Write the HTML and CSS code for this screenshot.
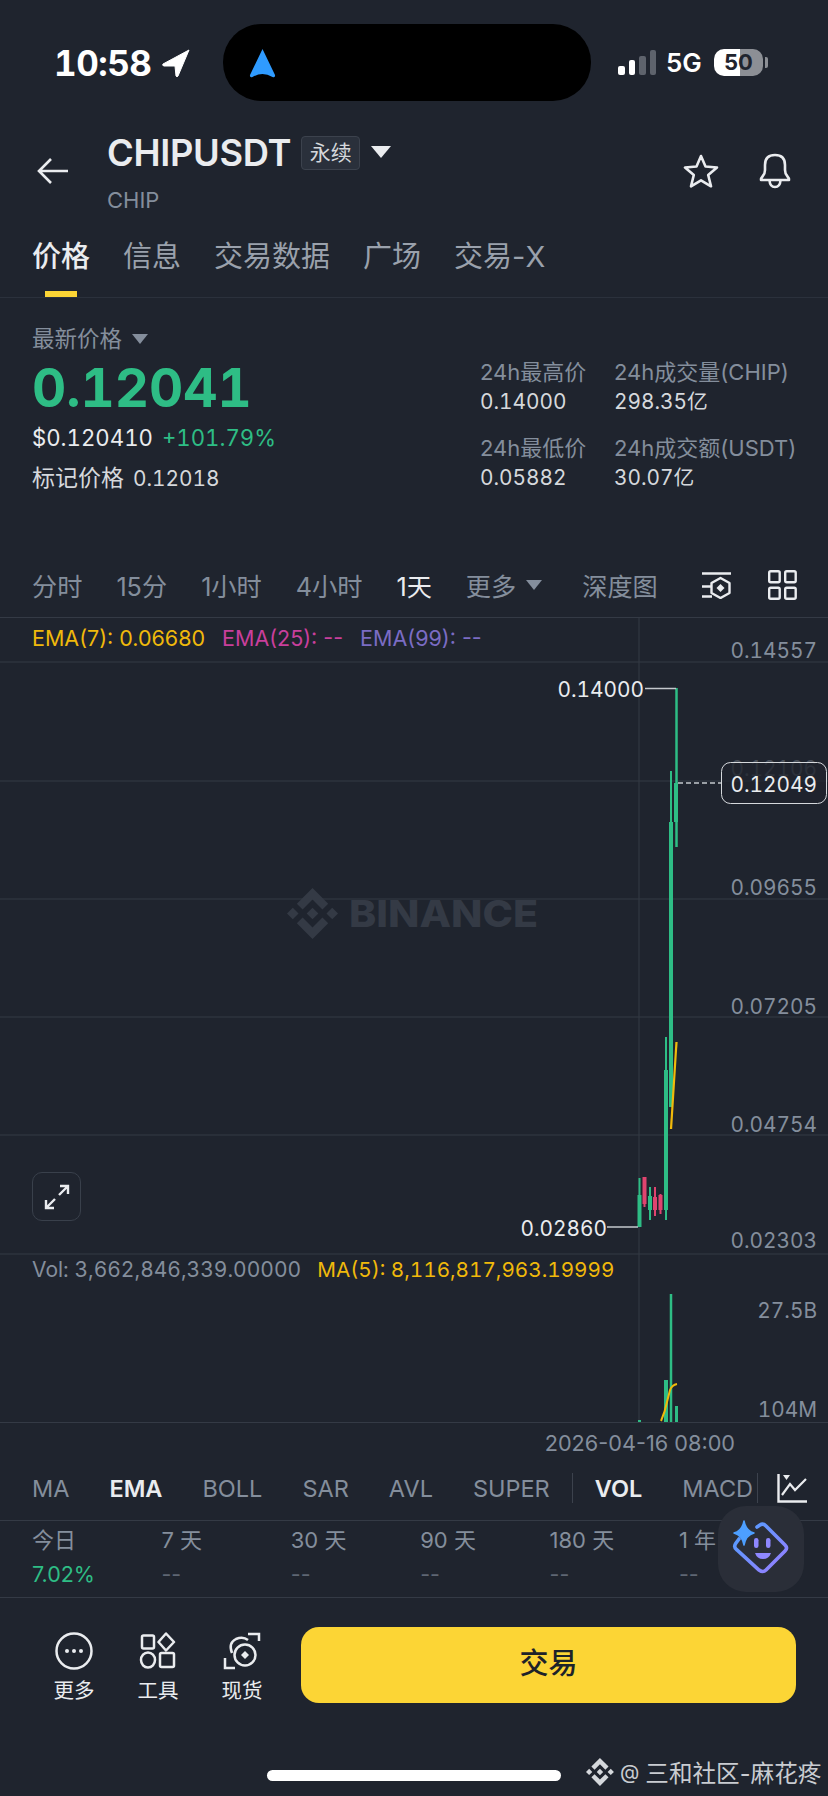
FILE: index.html
```html
<!DOCTYPE html>
<html lang="zh">
<head>
<meta charset="utf-8">
<title>CHIPUSDT</title>
<link rel="stylesheet" href="styles.css">
</head>
<body>
<div class="page">
  <div class="status">
    <div class="time">10:58</div>
    <svg class="loc" viewBox="0 0 28 28"><path d="M27 1 L1 15 Q0 16.500 2 17 L13 17 L14 27 Q15 28.500 16 27 Z" fill="#fff" stroke="#fff" stroke-width="1" stroke-linejoin="round"/></svg>
    <div class="island">
      <svg class="nav" viewBox="0 0 27 30"><path d="M13.500 1 L26 27 Q26.500 30 23.500 29 Q13.500 23 3.500 29 Q0.500 30 1 27 Z" fill="#2f9bff"/></svg>
    </div>
    <div class="sys">
      <div class="signal"><i class="b1"></i><i class="b2"></i><i class="b3"></i><i class="b4"></i></div>
      <div class="net">5G</div>
      <div class="batt">50</div>
      <div class="tip"></div>
    </div>
  </div>

  <div class="header">
    <svg class="back" viewBox="0 0 32 26"><path d="M31 13 H2 M14 1 L2 13 L14 25" fill="none" stroke="#eaecef" stroke-width="2.600"/></svg>
    <div class="title">
      <div class="title-row">
        <span class="sym">CHIPUSDT</span>
        <span class="tag">永续</span>
        <span class="tri tri-w"></span>
      </div>
      <div class="sub">CHIP</div>
    </div>
    <div class="head-icons">
      <svg class="star" viewBox="0 0 36 34"><path d="M18 2 L22.500 12.500 L34 13.500 L25.200 21 L28 32.300 L18 26.300 L8 32.300 L10.800 21 L2 13.500 L13.500 12.500 Z" fill="none" stroke="#eaecef" stroke-width="2.600" stroke-linejoin="round"/></svg>
      <svg class="bell" viewBox="0 0 36 36"><path d="M4 27 Q4 25 5.500 23.500 Q8 21 8 17 V12 Q8 2 18 2 Q28 2 28 12 V17 Q28 21 30.500 23.500 Q32 25 32 27 Z M12.500 27.500 Q13 34 18 34 Q23 34 23.500 27.500" fill="none" stroke="#eaecef" stroke-width="2.600" stroke-linejoin="round"/></svg>
    </div>
  </div>

  <div class="tabs">
    <span class="tab on">价格</span>
    <span class="tab">信息</span>
    <span class="tab">交易数据</span>
    <span class="tab">广场</span>
    <span class="tab">交易-X</span>
  </div>

  <div class="market">
    <div class="m-left">
      <div class="m-label"><span>最新价格</span><span class="tri tri-g"></span></div>
      <div class="price">0.12041</div>
      <div class="m-sub"><span>$0.120410</span><span class="up">+101.79%</span></div>
      <div class="m-mark"><span>标记价格</span><span class="num">0.12018</span></div>
    </div>
    <div class="m-right">
      <div class="cell"><div class="k">24h最高价</div><div class="v">0.14000</div></div>
      <div class="cell"><div class="k">24h成交量(CHIP)</div><div class="v">298.35亿</div></div>
      <div class="cell"><div class="k">24h最低价</div><div class="v">0.05882</div></div>
      <div class="cell"><div class="k">24h成交额(USDT)</div><div class="v">30.07亿</div></div>
    </div>
  </div>

  <div class="frames">
    <span>分时</span>
    <span>15分</span>
    <span>1小时</span>
    <span>4小时</span>
    <span class="on">1天</span>
    <span class="more"><span>更多</span><span class="tri tri-g"></span></span>
    <span class="depth">深度图</span>
    <svg class="ic-set" viewBox="0 0 31 28"><path d="M1 2.500 H30 M1 15.500 H11 M1 25.500 H11" fill="none" stroke="#eaecef" stroke-width="2.400"/><path d="M19.500 7 L28.500 12 V22 L19.500 27 L10.500 22 V12 Z" fill="none" stroke="#eaecef" stroke-width="2.400" stroke-linejoin="round"/><path d="M19.500 13 L23.500 17 L19.500 21 L15.500 17 Z" fill="#eaecef"/></svg>
    <svg class="ic-grid" viewBox="0 0 29 30"><g fill="none" stroke="#eaecef" stroke-width="2.400"><rect x="1.200" y="1.200" width="10.500" height="11" rx="1.500"/><rect x="17.200" y="1.200" width="10.500" height="11" rx="1.500"/><rect x="1.200" y="17.800" width="10.500" height="11" rx="1.500"/><rect x="17.200" y="17.800" width="10.500" height="11" rx="1.500"/></g></svg>
  </div>

  <div class="chart">
    <svg class="plot" viewBox="0 618 828 805">
      <g class="grid">
        <path d="M0 662 H828 M0 781 H828 M0 899 H828 M0 1017 H828 M0 1135 H828 M0 1254 H828 M639 618 V1422"/>
      </g>
      <g class="mark">
        <path transform="translate(287 888) scale(0.403)" d="M38.730 53.200l24.590-24.580 24.600 24.600 14.300-14.310L63.320 0 24.420 38.900zM0 63.310l14.300-14.310 14.310 14.310-14.310 14.300zM38.730 73.410l24.590 24.590 24.600-24.600 14.310 14.290-38.900 38.910-38.910-38.880-.02-.02zM97.990 63.310l14.300-14.310 14.320 14.300-14.310 14.310zM77.830 63.300l-14.510-14.520-10.730 10.730-1.240 1.230-2.540 2.540 14.510 14.500 14.510-14.470z"/>
        <text class="mark-t" x="349" y="927" textLength="189" lengthAdjust="spacingAndGlyphs">BINANCE</text>
      </g>

      <text class="axis" x="817" y="658">0.14557</text>
      <text class="axis faint" x="817" y="776">0.12106</text>
      <text class="axis" x="817" y="895">0.09655</text>
      <text class="axis" x="817" y="1014">0.07205</text>
      <text class="axis" x="817" y="1132">0.04754</text>
      <text class="axis" x="817" y="1248">0.02303</text>
      <text class="axis" x="817" y="1318">27.5B</text>
      <text class="axis" x="817" y="1417">104M</text>

      <g class="candles">
        <path class="g" stroke-width="2.500" d="M676.500 688 V847"/>
        <path class="g" stroke-width="4" d="M676 783 V822"/>
        <path class="g" stroke-width="2" d="M671 771 V822"/>
        <path class="g" stroke-width="4" d="M671 822 V1107"/>
        <path class="g" stroke-width="2" d="M666 1037 V1220"/>
        <path class="g" stroke-width="4" d="M666 1070 V1210"/>
        <path class="p" stroke-width="2" d="M660.500 1194 V1214"/>
        <path class="p" stroke-width="4" d="M660.500 1195 V1210"/>
        <path class="p" stroke-width="2" d="M655 1187 V1216"/>
        <path class="p" stroke-width="4" d="M655 1197 V1210"/>
        <path class="g" stroke-width="2" d="M650 1187 V1220"/>
        <path class="g" stroke-width="4" d="M650 1196 V1210"/>
        <path class="p" stroke-width="2" d="M644.500 1177 V1207"/>
        <path class="p" stroke-width="4" d="M644.500 1177 V1204"/>
        <path class="g" stroke-width="2" d="M639.500 1178 V1227"/>
        <path class="g" stroke-width="4" d="M639.500 1195 V1227"/>
        <path class="y" stroke-width="2.200" d="M671 1129 L676.500 1042"/>
      </g>

      <path class="lead" d="M645 688.500 H676 M607 1227 H638"/>
      <text class="hl" x="644" y="697">0.14000</text>
      <text class="hl" x="607" y="1236">0.02860</text>

      <path class="dash" d="M678 783 H721"/>
      <rect class="tagbox" x="721.500" y="762.500" width="105" height="41" rx="9"/>
      <text class="hl" x="817" y="792">0.12049</text>

      <g class="candles">
        <path class="g" stroke-width="2.500" d="M671 1294 V1422"/>
        <path class="g" stroke-width="4" d="M666 1380 V1422"/>
        <path class="g" stroke-width="3" d="M676.500 1406 V1422"/>
        <path class="g" stroke-width="3" d="M639.500 1420 V1422"/>
        <path class="y" stroke-width="2" fill="none" d="M661 1421 Q665 1412 667 1402 L670 1390 Q672 1385 677 1384"/>
      </g>
      <path class="base" d="M0 1422.500 H828"/>
    </svg>

    <div class="legend ema">
      <span class="c-y">EMA(7): 0.06680</span>
      <span class="c-p">EMA(25): --</span>
      <span class="c-v">EMA(99): --</span>
    </div>

    <div class="legend vol">
      <span class="c-g">Vol: 3,662,846,339.00000</span>
      <span class="c-y">MA(5): 8,116,817,963.19999</span>
    </div>

    <div class="expand">
      <svg viewBox="0 0 28 28"><path d="M17 3 H25 V11 M25 3 L16 12 M11 25 H3 V17 M3 25 L12 16" fill="none" stroke="#eaecef" stroke-width="2.400"/></svg>
    </div>
  </div>

  <div class="date">2026-04-16 08:00</div>

  <div class="inds">
    <span>MA</span>
    <span class="on">EMA</span>
    <span>BOLL</span>
    <span>SAR</span>
    <span>AVL</span>
    <span>SUPER</span>
    <i class="sep"></i>
    <span class="on">VOL</span>
    <span>MACD</span>
    <i class="sep sep2"></i>
    <svg class="ic-ind" viewBox="0 0 31 30"><path d="M1.500 1 V28.500 H30" fill="none" stroke="#eaecef" stroke-width="2.400"/><path d="M5 22 L13 11 L18 17 L29 6" fill="none" stroke="#eaecef" stroke-width="2.200"/><path d="M6 2 H13 L9.500 7 Z" fill="#eaecef"/></svg>
  </div>

  <div class="perf">
    <div class="pc"><div class="pk">今日</div><div class="pv up">7.02%</div></div>
    <div class="pc"><div class="pk">7 天</div><div class="pv">--</div></div>
    <div class="pc"><div class="pk">30 天</div><div class="pv">--</div></div>
    <div class="pc"><div class="pk">90 天</div><div class="pv">--</div></div>
    <div class="pc"><div class="pk">180 天</div><div class="pv">--</div></div>
    <div class="pc"><div class="pk">1 年</div><div class="pv">--</div></div>
  </div>

  <div class="bottom">
    <div class="actions">
      <div class="act">
        <svg viewBox="0 0 38 38"><circle cx="19" cy="19" r="17.500" fill="none" stroke="#eaecef" stroke-width="2.500"/><circle cx="12" cy="19" r="2" fill="#eaecef"/><circle cx="19" cy="19" r="2" fill="#eaecef"/><circle cx="26" cy="19" r="2" fill="#eaecef"/></svg>
        <span>更多</span>
      </div>
      <div class="act">
        <svg viewBox="0 0 38 38"><g fill="none" stroke="#eaecef" stroke-width="2.500"><rect x="3" y="3.500" width="12" height="13" rx="1.500"/><path d="M27 1.500 L35 10 L27 18.500 L19.500 10 Z" stroke-linejoin="round"/><ellipse cx="9" cy="28" rx="7" ry="7.500"/><rect x="21" y="21" width="14" height="14" rx="1.500"/></g></svg>
        <span>工具</span>
      </div>
      <div class="act">
        <svg viewBox="0 0 38 38"><g fill="none" stroke="#eaecef" stroke-width="2.500"><path d="M25 2 H36 V9 M2 26 V36 H12"/><path d="M9 21 Q5 11 13 7 Q20 4 25 8"/><circle cx="22" cy="23" r="10.500"/></g><path d="M22 19 L26 23 L22 27 L18 23 Z" fill="#eaecef"/></svg>
        <span>现货</span>
      </div>
    </div>
    <div class="trade">交易</div>
  </div>
  <div class="home"></div>

  <div class="ai">
    <svg viewBox="0 0 86 86">
      <defs><linearGradient id="aig" x1="0" y1="0" x2="1" y2="1"><stop offset="0" stop-color="#4d9fff"/><stop offset="1" stop-color="#9a7dff"/></linearGradient></defs>
      <path d="M39 21 L42 19 Q45 17 48 20 L67 39 Q70 42 67 45 L48 64 Q45 67 41 64 L19 44 Q15 41 18 37 L21 33" fill="none" stroke="url(#aig)" stroke-width="3.600" stroke-linecap="round"/>
      <path d="M26 15 Q28 25 36 27 Q28 29 26 39 Q24 29 16 27 Q24 25 26 15 Z" fill="#4d9fff" stroke="#4d9fff" stroke-width="1.500" stroke-linejoin="round"/>
      <rect x="36" y="32" width="4.500" height="10" rx="2.200" fill="#8f88ff"/>
      <rect x="48" y="32" width="4.500" height="10" rx="2.200" fill="#8f88ff"/>
      <path d="M37 47 H53 Q51 53 45 53 Q39 53 37 47 Z" fill="#8f88ff"/>
    </svg>
  </div>

  <div class="wm">
    <svg viewBox="0 0 127 127"><path d="M38.730 53.200l24.590-24.580 24.600 24.600 14.300-14.310L63.320 0 24.420 38.900zM0 63.310l14.300-14.310 14.310 14.310-14.310 14.300zM38.730 73.410l24.590 24.590 24.600-24.600 14.310 14.290-38.900 38.910-38.910-38.880-.02-.02zM97.990 63.310l14.300-14.310 14.320 14.300-14.310 14.310zM77.830 63.300l-14.510-14.520-10.730 10.730-1.240 1.230-2.540 2.540 14.510 14.500 14.510-14.470z" fill="#d5d8dc"/></svg>
    <span class="at">@</span>
    <span>三和社区-麻花疼</span>
  </div>
</div>
</body>
</html>
```
FILE: styles.css
```css
* { box-sizing: border-box; }
html, body { margin: 0; padding: 0; background: #1f242e; }
body { font-family: Inter, "Noto Sans CJK SC", sans-serif; color: #eaecef; }
.page { position: relative; width: 828px; height: 1796px; overflow: hidden; background: #1f242e; }

.status { height: 125px; display: flex; align-items: center; padding-left: 54px; }
.time { width: 108px; font-size: 35px; font-weight: 700; color: #fff; line-height: 40px; letter-spacing: -0.500px; font-feature-settings: "tnum"; }
.loc { width: 28px; height: 28px; }
.island { width: 368px; height: 77px; margin-left: 33px; border-radius: 38px; background: #000; display: flex; align-items: center; padding-left: 26px; }
.nav { width: 27px; height: 30px; }
.sys { display: flex; align-items: center; margin-left: 27px; }
.signal { display: flex; align-items: flex-end; gap: 4px; height: 25px; }
.signal i { display: block; width: 6.500px; border-radius: 2px; background: #fff; }
.signal .b1 { height: 9px; }
.signal .b2 { height: 15px; }
.signal .b3 { height: 19px; background: #5e636c; }
.signal .b4 { height: 25px; background: #5e636c; }
.net { margin-left: 10px; width: 48px; font-size: 26px; font-weight: 600; color: #fff; }
.batt { width: 49px; height: 27px; border-radius: 10px; background: linear-gradient(90deg, #fff 53%, #8c8f95 53%); color: #1f242e; font-size: 22px; font-weight: 700; text-align: center; line-height: 27px; }
.tip { width: 3px; height: 11px; margin-left: 2px; border-radius: 0 2px 2px 0; background: #8c8f95; }

.header { height: 92px; display: flex; align-items: center; padding-left: 37px; padding-right: 35px; }
.back { width: 32px; height: 26px; }
.title { align-self: flex-start; margin-left: 38px; margin-top: 8px; }
.title-row { display: flex; align-items: center; height: 40px; }
.sym { font-size: 36.300px; font-weight: 600; color: #eaecef; letter-spacing: -0.300px; }
.tag { margin-left: 10px; width: 59px; height: 34px; border: 1px solid #3c424d; border-radius: 4px; background: #2a303b; color: #d5d8dc; font-size: 21px; line-height: 31px; text-align: center; }
.tri { display: inline-block; width: 0; height: 0; border-style: solid; border-color: transparent; border-bottom-width: 0; }
.tri-w { margin-left: 11px; margin-top: -2px; border-width: 12px 10px 0; border-top-color: #eaecef; }
.tri-g { border-width: 10px 8px 0; border-top-color: #848e9c; }
.sub { margin-top: 10px; line-height: 34px; font-size: 22px; color: #848e9c; }
.head-icons { margin-left: auto; display: flex; align-items: center; gap: 38px; }
.star { width: 36px; height: 34px; }
.bell { width: 36px; height: 36px; }

.tabs { height: 81px; display: flex; align-items: center; gap: 33px; padding: 0 32px 1px; border-bottom: 1px solid #2b313c; }
.tab { position: relative; font-size: 29px; line-height: 40px; color: #9aa1ac; }
.tab.on { color: #eaecef; font-weight: 500; }
.tab.on::after { content: ""; position: absolute; left: 13px; top: 54px; width: 32px; height: 6px; background: #fcd535; }

.market { height: 262px; display: flex; padding-left: 32px; }
.m-left { width: 448px; padding-top: 29px; }
.m-label { display: flex; align-items: center; gap: 10px; font-size: 22.500px; line-height: 24px; color: #848e9c; }
.price { margin-top: 7px; font-size: 53px; line-height: 60px; font-weight: 700; color: #2ebd85; font-feature-settings: "tnum"; }
.m-sub { margin-top: 5px; display: flex; gap: 9px; font-size: 22.200px; line-height: 30px; color: #eaecef; font-feature-settings: "tnum"; }
.up { color: #2ebd85; }
.m-mark { margin-top: 10px; display: flex; align-items: baseline; gap: 9px; font-size: 23px; line-height: 30px; color: #d5d8dc; }
.num { font-size: 20.800px; font-feature-settings: "tnum"; }
.m-right { padding-top: 60px; display: grid; grid-template-columns: 134px 1fr; grid-template-rows: 60px 60px; row-gap: 16px; }
.k { font-size: 22px; line-height: 28px; color: #848e9c; white-space: nowrap; }
.v { font-size: 20.800px; line-height: 32px; color: #d5d8dc; font-feature-settings: "tnum"; }

.frames { height: 58px; display: flex; align-items: center; gap: 34px; padding: 0 32px 8px; border-bottom: 1px solid #343a45; font-size: 25.200px; color: #848e9c; white-space: nowrap; }
.frames .on { color: #eaecef; }
.more { display: flex; align-items: center; gap: 10px; }
.depth { margin-left: 6px; }
.ic-set { width: 31px; height: 28px; margin-left: 9px; flex: none; }
.ic-grid { width: 29px; height: 30px; margin-left: 2px; flex: none; }

.chart { position: relative; height: 805px; }
.plot { display: block; width: 828px; height: 805px; }
.plot text { font-family: Inter, sans-serif; }
.grid path { stroke: #343a45; stroke-width: 1; fill: none; }
.mark { fill: #343a45; }
.plot .mark-t { font-size: 37px; font-weight: 800; }
.axis { font-size: 20.800px; fill: #848e9c; text-anchor: end; font-feature-settings: "tnum"; }
.faint { fill: #4a505b; }
.hl { font-size: 20.800px; fill: #eaecef; text-anchor: end; font-feature-settings: "tnum"; }
.lead { fill: none; stroke: #c4c8cd; stroke-width: 1.500; }
.dash { stroke: #c4c8cd; stroke-width: 1.500; stroke-dasharray: 5 3; fill: none; }
.tagbox { fill: rgba(31, 36, 46, 0.7); stroke: #d5d8dc; stroke-width: 1; }
.base { stroke: #343a45; stroke-width: 1; }
.candles .g { stroke: #2ebd85; fill: none; }
.candles .p { stroke: #e0446f; fill: none; }
.candles .y { stroke: #f0b90b; }

.legend { position: absolute; left: 32px; display: flex; line-height: 28px; white-space: nowrap; }
.ema { top: 6px; gap: 17px; font-size: 21.500px; }
.vol { top: 638px; gap: 16px; font-size: 21px; font-feature-settings: "tnum"; }
.vol .c-y { font-size: 20.700px; }
.c-y { color: #f0b90b; }
.c-p { color: #c93f9c; }
.c-v { color: #7b6cc4; }
.c-g { color: #848e9c; }
.expand { position: absolute; left: 32px; top: 554px; width: 49px; height: 49px; border: 1.500px solid #39404b; border-radius: 10px; display: flex; align-items: center; justify-content: center; }
.expand svg { width: 28px; height: 28px; }

.date { height: 39px; padding-right: 93px; text-align: right; font-size: 21.700px; line-height: 40px; color: #848e9c; }

.inds { height: 59px; display: flex; align-items: center; gap: 40px; padding: 0 0 6px 32px; border-bottom: 1px solid #343a45; font-size: 23.500px; color: #848e9c; }
.inds .on { color: #eaecef; font-weight: 600; }
.sep { display: block; width: 1px; height: 30px; margin: 0 -18px; background: #3c424d; }
.sep2 { margin: 0 0 0 -36px; }
.ic-ind { width: 31px; height: 30px; margin-left: -21px; }

.perf { height: 77px; display: grid; grid-template-columns: repeat(6, 129.400px); padding: 5px 0 0 32px; border-bottom: 1px solid #343a45; }
.pk { font-size: 22px; line-height: 28px; color: #848e9c; }
.pv { margin-top: 5px; font-size: 21.500px; line-height: 30px; color: #5e6673; }
.pv.up { color: #2ebd85; }

.bottom { display: flex; padding: 29px 32px 0; }
.actions { display: flex; }
.act { width: 84px; display: flex; flex-direction: column; align-items: center; padding-top: 5px; font-size: 20.500px; color: #eaecef; }
.act svg { width: 38px; height: 38px; }
.act span { margin-top: 7px; line-height: 28px; }
.trade { margin-left: 17px; width: 495px; height: 76px; border-radius: 18px; background: #fcd535; color: #1e2329; font-size: 29px; font-weight: 500; text-align: center; line-height: 74px; }
.home { width: 294px; height: 11px; margin: 65px 0 0 267px; border-radius: 6px; background: #fff; }

.ai { position: absolute; left: 718px; top: 1506px; width: 86px; height: 86px; border-radius: 28px; background: #2a2e38; }
.ai svg { display: block; width: 86px; height: 86px; }

.wm { position: absolute; left: 586px; top: 1755px; display: flex; align-items: center; gap: 6px; font-size: 23.600px; color: #c9ccd1; white-space: nowrap; }
.wm svg { width: 28px; height: 28px; }
.wm .at { font-size: 20px; }
```
